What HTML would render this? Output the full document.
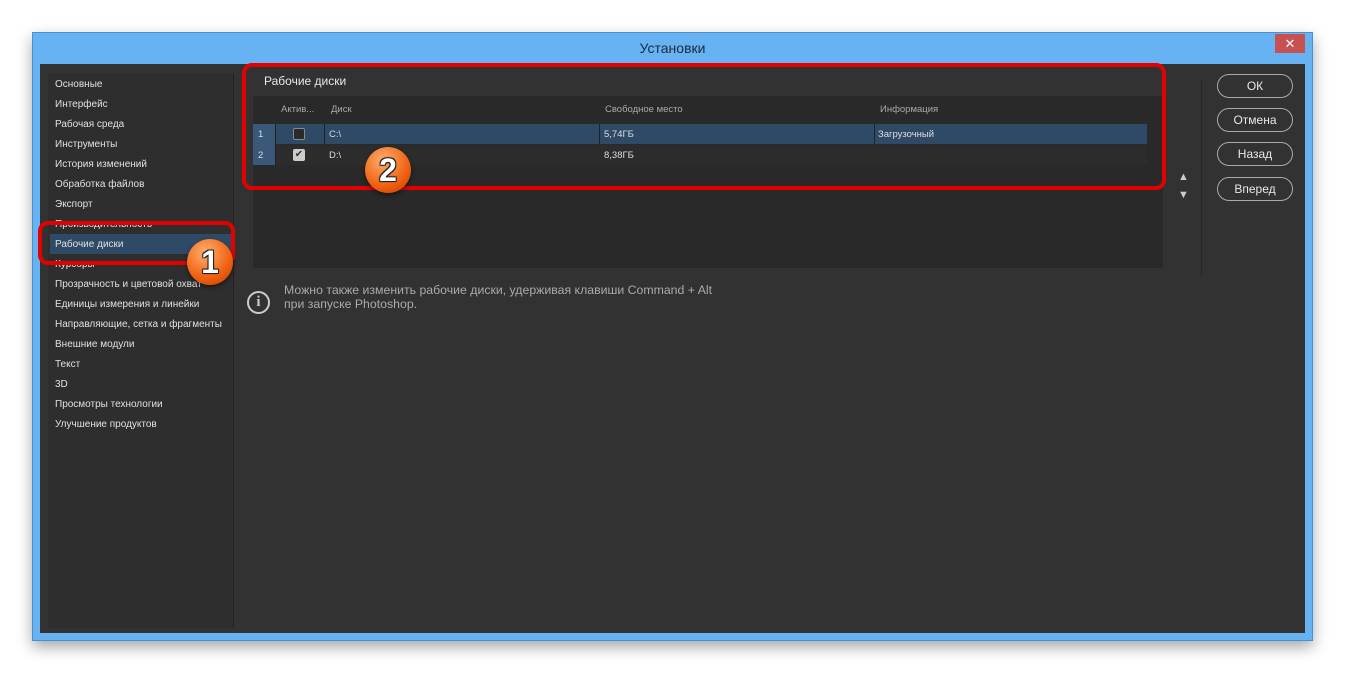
<!DOCTYPE html>
<html><head><meta charset="utf-8"><style>
*{margin:0;padding:0;box-sizing:border-box}
body{width:1345px;height:674px;background:#fff;position:relative;overflow:hidden;font-family:"Liberation Sans","DejaVu Sans",sans-serif}
.a{position:absolute}
.frame{left:32px;top:32px;width:1281px;height:609px;background:#67b2f2;border:1px solid #4a90d0;box-shadow:0 6px 14px rgba(0,0,0,.35)}
.inner{left:40px;top:64px;width:1265px;height:569px;background:#323232}
.title{left:32px;top:40px;width:1281px;text-align:center;font-size:14px;color:#1d2a3a}
.close{left:1275px;top:34px;width:30px;height:19px;background:#c75050;color:#fff;text-align:center;font-size:13px;line-height:19px}
.list{left:48px;top:73px;width:186px;height:555px;background:#2e2e2e;border-right:1px solid #222}
.it{position:absolute;left:7px;font-size:10px;color:#e0e0e0;white-space:nowrap}
.sel{left:50px;top:234px;width:182px;height:20px;background:#2f4a66}
.tab{left:253px;top:96px;width:910px;height:172px;background:#292929}
.th{font-size:9.5px;color:#aaa;top:104px}
.row{left:253px;width:894px;height:20px}
.td{font-size:9.5px;color:#ddd}
.btn{left:1217px;width:76px;height:24px;border:1px solid #aaa;border-radius:12px;color:#e8e8e8;font-size:12px;text-align:center;line-height:22px}
.red{border:4px solid #e30000;border-radius:10px}
.badge{width:46px;height:46px;border-radius:50%;background:radial-gradient(circle at 40% 30%,#ffb070,#f06010 60%,#c03800);box-shadow:0 2px 4px rgba(0,0,0,.5);color:#fff;font-weight:bold;font-size:32px;text-align:center;line-height:46px;text-shadow:0 0 2px #000,1px 1px 0 #333,-1px -1px 0 #333,1px -1px 0 #333,-1px 1px 0 #333}
</style></head><body>
<div class="a frame"></div>
<div class="a title">Установки</div>
<div class="a close">✕</div>
<div class="a inner"></div>
<div class="a list">
<div class="it" style="top:6px">Основные</div>
<div class="it" style="top:26px">Интерфейс</div>
<div class="it" style="top:46px">Рабочая среда</div>
<div class="it" style="top:66px">Инструменты</div>
<div class="it" style="top:86px">История изменений</div>
<div class="it" style="top:106px">Обработка файлов</div>
<div class="it" style="top:126px">Экспорт</div>
<div class="it" style="top:146px">Производительность</div>
</div>
<div class="a sel"></div>
<div class="a list" style="background:none;border:none">
<div class="it" style="top:166px">Рабочие диски</div>
<div class="it" style="top:186px">Курсоры</div>
<div class="it" style="top:206px">Прозрачность и цветовой охват</div>
<div class="it" style="top:226px">Единицы измерения и линейки</div>
<div class="it" style="top:246px">Направляющие, сетка и фрагменты</div>
<div class="it" style="top:266px">Внешние модули</div>
<div class="it" style="top:286px">Текст</div>
<div class="it" style="top:306px">3D</div>
<div class="it" style="top:326px">Просмотры технологии</div>
<div class="it" style="top:346px">Улучшение продуктов</div>
</div>
<div class="a" style="left:264px;top:74px;font-size:12px;color:#e8e8e8">Рабочие диски</div>
<div class="a tab"></div>
<div class="a th" style="left:281px">Актив...</div>
<div class="a th" style="left:331px">Диск</div>
<div class="a th" style="left:605px">Свободное место</div>
<div class="a th" style="left:880px">Информация</div>
<div class="a row" style="top:124px;background:#2f4a66"></div>
<div class="a row" style="top:145px;background:#2c2c2c"></div>
<div class="a" style="left:253px;top:124px;width:22px;height:41px;background:#3a5878"></div>
<div class="a" style="left:275px;top:124px;width:1px;height:41px;background:#222"></div>
<div class="a" style="left:324px;top:124px;width:1px;height:20px;background:#222"></div>
<div class="a" style="left:599px;top:124px;width:1px;height:20px;background:#222"></div>
<div class="a" style="left:874px;top:124px;width:1px;height:20px;background:#222"></div>
<div class="a td" style="left:258px;top:129px">1</div>
<div class="a td" style="left:258px;top:150px">2</div>
<div class="a" style="left:293px;top:128px;width:12px;height:12px;border:1px solid #888;border-radius:2px;background:#2a2a2a"></div>
<div class="a" style="left:293px;top:149px;width:12px;height:12px;border-radius:2px;background:#ccc;color:#333;font-size:10px;line-height:12px;text-align:center">✔</div>
<div class="a td" style="left:329px;top:129px">C:\</div>
<div class="a td" style="left:329px;top:150px">D:\</div>
<div class="a td" style="left:604px;top:129px">5,74ГБ</div>
<div class="a td" style="left:604px;top:150px">8,38ГБ</div>
<div class="a td" style="left:878px;top:129px">Загрузочный</div>
<div class="a" style="left:1178px;top:171px;color:#ccc;font-size:11px">▲</div>
<div class="a" style="left:1178px;top:189px;color:#ccc;font-size:11px">▼</div>
<div class="a" style="left:1201px;top:80px;width:1px;height:196px;background:#262626"></div>
<div class="a btn" style="top:74px">ОК</div>
<div class="a btn" style="top:108px">Отмена</div>
<div class="a btn" style="top:142px">Назад</div>
<div class="a btn" style="top:177px">Вперед</div>
<div class="a" style="left:247px;top:291px;width:23px;height:23px;border:2px solid #ccc;border-radius:50%;color:#ccc;font-size:15px;font-weight:bold;text-align:center;line-height:19px;font-family:'Liberation Serif',serif">i</div>
<div class="a" style="left:284px;top:283px;font-size:12.3px;color:#aaa;line-height:14px">Можно также изменить рабочие диски, удерживая клавиши Command + Alt<br>при запуске Photoshop.</div>
<div class="a red" style="left:38px;top:221px;width:197px;height:44px"></div>
<div class="a red" style="left:242px;top:63px;width:924px;height:127px"></div>
<div class="a badge" style="left:187px;top:239px">1</div>
<div class="a badge" style="left:365px;top:147px">2</div>
</body></html>
